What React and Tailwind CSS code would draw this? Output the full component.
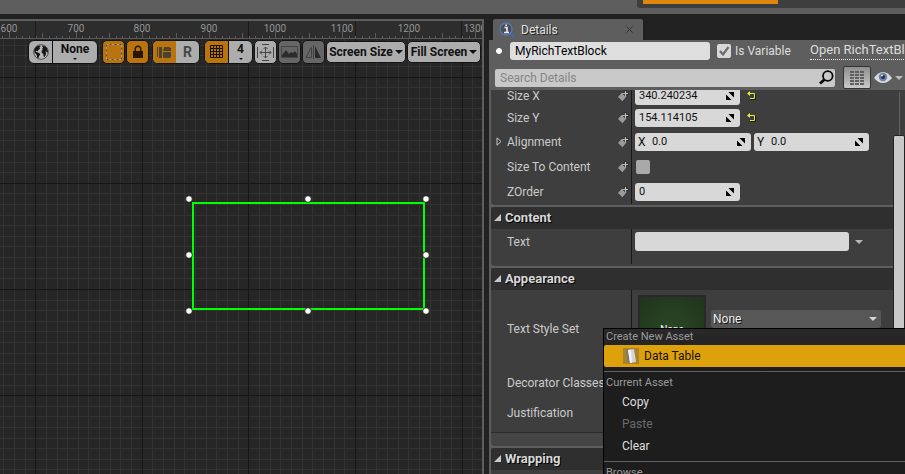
import React from "react";

const range = (n) => Array.from({ length: n }, (_, i) => i);

function Caret({ className = "h-1 w-2" }) {
  return (
    <svg viewBox="0 0 8 4" preserveAspectRatio="none" className={`shrink-0 ${className}`} fill="currentColor" aria-hidden="true">
      <path d="M0 0h8L4 4z" />
    </svg>
  );
}

function Ruler() {
  return (
    <svg className="block h-[18px] w-full shrink-0 bg-[#2d2d2d]" aria-hidden="true">
      {range(12).map((i) => (
        <line key={i} x1={35.5 + Math.round(i * 106.6)} x2={35.5 + Math.round(i * 106.6)} y1="0" y2="18" stroke="#1b1b1b" />
      ))}
      {range(120).map((i) => {
        const x = 9.5 + Math.round((i - 1) * 6.66);
        const k = (i + 9) % 10;
        const top = k === 0 ? 10 : k === 5 ? 12 : 15;
        return <line key={i} x1={x} x2={x} y1={top} y2="17" stroke="#5a5a5a" />;
      })}
      {range(8).map((i) => (
        <text
          key={i}
          x={9 + Math.round(i * 66.6)}
          y="11"
          textAnchor="middle"
          fill="#949494"
          className="font-[Roboto] text-[10px]"
        >
          {600 + i * 100}
        </text>
      ))}
      <line x1="0" x2="100%" y1="17.5" y2="17.5" stroke="#5a5a5a" />
    </svg>
  );
}

function Canvas() {
  const handles = [
    [189, 160], [308, 160], [426, 160],
    [189, 216], [426, 216],
    [189, 272], [308, 272], [426, 272],
  ];
  return (
    <svg className="absolute inset-0 h-full w-full bg-[#262626]" aria-hidden="true">
      {range(120).map((i) => {
        const x = Math.round(3.2 + i * 10.66) + 0.5;
        return i % 10 === 3 ? null : <line key={i} x1={x} x2={x} y1="0" y2="100%" stroke="#323232" />;
      })}
      {range(100).map((i) => {
        const y = Math.round(5.7 + i * 10.62) + 0.5;
        return i % 10 === 3 ? null : <line key={i} x1="0" x2="100%" y1={y} y2={y} stroke="#323232" />;
      })}
      {range(10).map((i) => {
        const y = Math.round(37.5 + i * 106.2) + 0.5;
        return <line key={i} x1="0" x2="100%" y1={y} y2={y} stroke="#161616" />;
      })}
      {range(12).map((i) => {
        const x = Math.round(35.2 + i * 106.6) + 0.5;
        return <line key={i} x1={x} x2={x} y1="0" y2="100%" stroke="#161616" />;
      })}
      <rect x="193" y="164" width="231" height="106" fill="none" stroke="#00ff00" strokeWidth="2" />
      {handles.map(([x, y]) => (
        <circle key={`${x}-${y}`} cx={x} cy={y} r="3.3" fill="#fff" stroke="#111" strokeWidth="0.8" />
      ))}
    </svg>
  );
}

function GlobeIcon() {
  return (
    <svg viewBox="0 0 16 16" className="size-4" aria-hidden="true">
      <circle cx="8" cy="8" r="7.3" fill="#b8b8b8" stroke="#333" strokeWidth="0.8" />
      <path fill="#151515" d="M1.500 5 3.500 2.400 6.500 1.400 7.600 2.600 6.400 3.600 7 4.800 5.400 6 4.600 7.200 3.400 6.800 2.600 7.400 4 8.200 6.200 9 7.200 10.400 6 12.200 5.400 14.400 4.200 13.400 3.600 10.800 1.800 9 1.200 7zM9.400 1.600 12.400 2.500 14.200 4.800 15 7.600 14.400 9 13.400 7.600 12.300 7.800 13.200 9.200 12.400 11.800 11.400 13 10.600 12.400 10.300 9.800 8.800 9 8.600 7 9.800 5.800 9 4.800 10.200 3.600 9.200 2.700z" />
    </svg>
  );
}

function GridIcon() {
  return (
    <svg viewBox="0 0 14 14" className="size-[14px]" aria-hidden="true">
      <path fill="none" stroke="#1a1000" d="M.5.5h12v12h-12zM3.500 0v13M6.500 0v13M9.500 0v13M0 3.500h13M0 6.500h13M0 9.500h13" />
    </svg>
  );
}

const toolButton = "flex items-center justify-center rounded-[5px] border border-[#141414]";

function Toolbar() {
  return (
    <div className="relative flex items-center justify-end pt-px pr-px font-bold text-[#111]">
      <div className="mr-1 flex h-6 w-[70px] overflow-hidden rounded-md border border-[#101010] bg-[#adadad]">
        <button aria-label="Localization" className="flex w-6 items-center justify-center border-r border-[#101010]"><GlobeIcon /></button>
        <button className="flex flex-1 flex-col items-center text-[12px] leading-[17px]">None<Caret className="h-[2px] w-1" /></button>
      </div>
      <button aria-label="Show outlines" className={`${toolButton} mr-px h-6 w-[23px] bg-[#ba740d]`}>
        <svg viewBox="0 0 16 16" className="size-4"><path fill="none" stroke="#57472b" d="M.5.5h15v15H.5z" /><path fill="none" stroke="#b0a080" strokeDasharray="3 2" d="M.5.5h15v15H.5z" /></svg>
      </button>
      <button aria-label="Respect locks" className={`${toolButton} mr-[3px] h-6 w-[23px] bg-[#ba740d]`}>
        <svg viewBox="0 0 12 14" className="h-[14px] w-3"><path fill="#251700" d="M1 6h10v7H1z" /><path d="M3.200 7V4a2.800 2.800 0 0 1 5.600 0v3" fill="none" stroke="#251700" strokeWidth="1.400" /></svg>
      </button>
      <div className="mr-1 flex h-6 w-12 overflow-hidden rounded-md border border-[#141414] bg-[#adadad]">
        <button aria-label="Transform mode" className="flex w-[23px] items-center justify-center bg-[#ba740d]">
          <svg viewBox="0 0 15 13" className="h-[13px] w-[15px]" fill="#4b4131"><path d="M0 1h1v10H0zM2 1h3v11H2zM7 1h5l2 1v3H6zM6 6h8v4l-1 2H7l-1-1z" /></svg>
        </button>
        <button className="flex-1 text-[14px] leading-none text-[#464646]">R</button>
      </div>
      <div className="mr-px flex h-6 w-[49px] overflow-hidden rounded-md border border-[#101010] bg-[#adadad]">
        <button aria-label="Grid snapping" className="flex w-6 items-center justify-center border-r border-[#101010] bg-[#ba740d]"><GridIcon /></button>
        <button className="flex flex-1 flex-col items-center text-[12px] leading-[17px]">4<Caret className="h-[2px] w-1" /></button>
      </div>
      <button aria-label="Zoom to fit" className={`${toolButton} mr-px h-6 w-[23px] bg-[#adadad]`}>
        <svg viewBox="0 0 17 17" className="size-[17px]" fill="none" stroke="#444"><path d="M.5 3v11M16.500 3v11M5 .5h7M5 16.500h7M3 8.500h11M8.500 3v11M5 6.500 3 8.500l2 2M12 6.500l2 2-2 2M6.500 5l2-2 2 2M6.500 12l2 2 2-2" /></svg>
      </button>
      <button aria-label="Preview background" className={`${toolButton} mr-px h-6 w-[23px] bg-[#666]`}>
        <svg viewBox="0 0 17 12" className="h-3 w-[17px]"><path d="M.5.5h16v11H.5z" fill="none" stroke="#444" /><path d="M1 11V9l4-5 3 4 2-2 2 1 2-2 2 3v3z" fill="#2c2c2c" /></svg>
      </button>
      <button aria-label="Flip preview" className={`${toolButton} mr-px h-6 w-[23px] bg-[#666]`}>
        <svg viewBox="0 0 17 14" className="h-[14px] w-[17px]"><path d="M6.500 2v10.500H1zM8.500 0v14" fill="none" stroke="#404040" /><path d="M10 1v12h6z" fill="#292929" /></svg>
      </button>
      <button className={`${toolButton} mr-px h-[22px] w-20 gap-[2px] bg-[#adadad] text-[12px] whitespace-nowrap`}>Screen Size<Caret /></button>
      <button className={`${toolButton} h-[22px] w-[74px] gap-[2px] bg-[#adadad] text-[12px] whitespace-nowrap`}>Fill Screen<Caret /></button>
    </div>
  );
}

function BindIcon() {
  return (
    <svg viewBox="0 0 12 12" className="mr-[2px] size-3 shrink-0" aria-hidden="true">
      <path fill="#9a9a9a" stroke="#242424" strokeWidth="0.6" d="M5 2 9.800 6.500 5.500 11.700 .5 7z" />
      <path stroke="#2c2c2c" strokeWidth="2.600" d="M8.500 0v6M6 3.500h5.500" />
      <path stroke="#c0c0c0" strokeWidth="1.200" d="M8.500 1v5M6 3.500h5" />
    </svg>
  );
}

function SpinIcon() {
  return (
    <svg viewBox="0 0 8 8" className="mr-[6px] size-2 shrink-0 fill-black" aria-hidden="true">
      <path d="M2.500 0H8v5.500zM0 2.500V8h5.500z" />
    </svg>
  );
}

function NumberBox({ id, axis, value, label, width }) {
  return (
    <div className={`flex h-[18px] items-center rounded-[3px] bg-[#d8d8d8] text-[11px] text-[#111] ${width}`}>
      {axis && <span className="w-[13px] pl-[3px] text-[12px]">{axis}</span>}
      <input id={id} aria-label={label} defaultValue={value} className="h-full min-w-0 flex-1 bg-transparent pl-1 outline-none" />
      <SpinIcon />
    </div>
  );
}

function ResetButton({ label }) {
  return (
    <button aria-label={label} className="ml-[7px]">
      <svg viewBox="0 0 9 9" className="block size-[9px]" aria-hidden="true">
        <path d="M3 8.500H8.500V3" fill="none" stroke="#171717" />
        <path d="M1 2.500h6.500v5H3" fill="none" stroke="#e7ed35" />
        <path d="M0 2.500 3 0v5z" fill="#e7ed35" />
      </svg>
    </button>
  );
}

function Row({ label, htmlFor, height, bind, expand, children }) {
  return (
    <div className={`flex shrink-0 text-[12px] ${height}`}>
      <div className="flex w-[141px] shrink-0 items-center border-r border-[#191919]">
        <span className="flex w-4 shrink-0 justify-center">
          {expand && (
            <svg viewBox="0 0 6 9" className="h-[9px] w-[6px]" aria-hidden="true"><path d="M1 .8v7.400l4-3.700z" fill="none" stroke="#c4c4c4" /></svg>
          )}
        </span>
        <label htmlFor={htmlFor} className="flex-1 whitespace-nowrap text-[#cbcbcb]">{label}</label>
        {bind && <BindIcon />}
      </div>
      <div className="flex min-w-0 flex-1 items-center pl-[3px]">{children}</div>
    </div>
  );
}

function SectionHeader({ children }) {
  return (
    <h2 className="flex h-[22px] shrink-0 items-center gap-1 rounded-tl-[4px] bg-[#2f2f2f] pl-[3px] text-[13px] font-bold text-[#d8d8d8] [text-shadow:1px_1px_0_#000]">
      <svg viewBox="0 0 7 7" className="mb-px size-[7px]" fill="#c8c8c8" aria-hidden="true"><path d="M7 0v7H0z" /></svg>
      {children}
    </h2>
  );
}

function DetailsTab() {
  return (
    <div className="ml-1 flex h-[21px] w-[150px] items-center rounded-t-[2px] bg-[#5e5e5e] pr-[10px] pl-[6px]">
      <svg viewBox="0 0 16 16" className="size-4 shrink-0" aria-hidden="true">
        <path d="m11 11 4 4" stroke="#4267bd" strokeWidth="2.200" />
        <circle cx="7" cy="7" r="6" fill="#4b4e55" stroke="#5579bf" strokeWidth="1.300" />
        <path d="M5.500 5.500H8V10M5 10.500h5M6.300 3.200h1.700" stroke="#eee" strokeWidth="1.600" fill="none" />
      </svg>
      <span className="ml-[6px] flex-1 text-[12px] text-[#e2e2e2] [text-shadow:1px_1px_0_#222]">Details</span>
      <button aria-label="Close tab">
        <svg viewBox="0 0 7 7" className="block size-[7px]"><path d="m.5.5 6 6M6.500.5l-6 6" stroke="#343434" /></svg>
      </button>
    </div>
  );
}

function DetailsHeader() {
  return (
    <div className="flex h-[50px] shrink-0 flex-col text-[12px]">
      <div className="flex items-center pt-[2px]">
        <svg viewBox="0 0 8 8" className="ml-[6px] size-2 shrink-0" aria-hidden="true"><path d="M3 1h2l2 2v2L5 7H3L1 5V3z" fill="#fff" /></svg>
        <input aria-label="Widget name" defaultValue="MyRichTextBlock" className="ml-[7px] h-[18px] w-[200px] shrink-0 rounded-[3px] bg-[#dedede] px-[5px] text-black outline-none" />
        <span className="relative ml-[7px] size-[14px] shrink-0">
          <input id="is-variable" type="checkbox" defaultChecked className="block size-[14px] appearance-none rounded-[2px] bg-[#d8d8d8]" />
          <svg viewBox="0 0 12 12" className="pointer-events-none absolute inset-px size-3" aria-hidden="true"><path d="m2 6 3 3.500L10.500 2" fill="none" stroke="#6f6f6f" strokeWidth="2.300" /></svg>
        </span>
        <label htmlFor="is-variable" className="ml-1 w-[75px] shrink-0 whitespace-nowrap text-[#ddd]">Is Variable</label>
        <a href="#source" className="h-[18px] border-b border-dotted border-[#eee] text-[13px] leading-4 whitespace-nowrap text-[#ddd]">Open RichTextBlock.h</a>
      </div>
      <div className="mt-[6px] flex items-center pl-[6px]">
        <div className="flex h-[18px] w-[340px] items-center rounded-[2px] bg-[#c9c9c9] pr-px">
          <input aria-label="Search Details" placeholder="Search Details" className="h-full min-w-0 flex-1 bg-transparent pl-[5px] outline-none placeholder:text-[#858585]" />
          <svg viewBox="0 0 15 15" className="size-[15px]" aria-hidden="true"><circle cx="8.800" cy="6" r="4.800" fill="none" stroke="#080808" strokeWidth="1.800" /><path d="m5.500 9.500-4.500 4" stroke="#080808" strokeWidth="2.800" /></svg>
        </div>
        <button aria-label="Property matrix" className="ml-2 flex h-[23px] w-7 items-center justify-center rounded-[2px] border border-[#333] bg-linear-to-b from-[#8f8f8f] to-[#c9c9c9]">
          <svg viewBox="0 0 14 14" className="size-[14px]" stroke="#606060" strokeWidth="2"><path d="M0 1h4M5 1h4M10 1h4M0 4h4M5 4h4M10 4h4M0 7h4M5 7h4M10 7h4M0 10h4M5 10h4M10 10h4M0 13h4M5 13h4M10 13h4" /></svg>
        </button>
        <button aria-label="View options" className="ml-[3px] flex items-center gap-[3px] text-[#bbb]">
          <svg viewBox="0 0 18 11" className="h-[11px] w-[18px]"><path d="M0 6q4-6 9-6t9 6q-4 5-9 5T0 6z" fill="#d7d9dd" /><circle cx="9" cy="5" r="4.200" fill="#6a82a8" /><circle cx="9" cy="5" r="2" fill="#202f4a" /><circle cx="8" cy="3.500" r="1" fill="#dfe8f7" /></svg>
          <Caret />
        </button>
      </div>
    </div>
  );
}

function ContextMenu() {
  const item = "flex h-[22px] w-full items-center pl-[18px] text-left text-[12px]";
  const heading = "flex items-center pl-[2px] text-[11px] text-[#9a9a9a]";
  return (
    <div role="menu" className="absolute top-[238px] right-0 left-[114px] h-[200px] border-t border-l border-black bg-linear-to-b from-[#292929] to-[#1d1d1d] to-20% text-[12px] text-[#dedede]">
      <div className={`${heading} h-4`}>Create New Asset</div>
      <button role="menuitem" className="flex h-[22px] w-full items-center rounded-l-[2px] bg-[#dda20b] pl-[19px] text-[#151000]">
        <span className="mr-[5px] flex size-4 items-center justify-center bg-[#a7842c]">
          <svg viewBox="0 0 12 15" className="h-[15px] w-3" aria-hidden="true"><path d="m1 1 4-1 2 12-4 2z" fill="#777" /><path d="m3 1 6-1 2 13-6 1z" fill="#d5d5d5" /><path d="m3 1 3-.5 1 13-2 .5z" fill="#f3f3f3" /></svg>
        </span>
        Data Table
      </button>
      <div className="mt-1 mb-1 h-px bg-[#606060]" />
      <div className={`${heading} h-[14px]`}>Current Asset</div>
      <div className="pt-px">
        <button role="menuitem" className={item}>Copy</button>
        <button role="menuitem" disabled className={`${item} text-[#6b6b6b]`}>Paste</button>
        <button role="menuitem" className={item}>Clear</button>
      </div>
      <div className="mt-1 mb-1 h-px bg-[#606060]" />
      <div className={`${heading} h-[14px]`}>Browse</div>
    </div>
  );
}

function PropertyList() {
  return (
    <div className="relative min-h-0 flex-1 overflow-hidden">
      <div className="-mt-[5px] ml-[2px] flex flex-col gap-[2px]">
        <section className="flex flex-col rounded-bl-[4px] bg-[#3e3e3e] pb-px">
          <Row label="Size X" htmlFor="size-x" height="h-[21px]" bind>
            <NumberBox id="size-x" value="340.240234" width="w-[105px]" />
            <ResetButton label="Reset Size X" />
          </Row>
          <Row label="Size Y" htmlFor="size-y" height="h-[23px]" bind>
            <NumberBox id="size-y" value="154.114105" width="w-[105px]" />
            <ResetButton label="Reset Size Y" />
          </Row>
          <Row label="Alignment" htmlFor="align-x" height="h-[25px]" bind expand>
            <NumberBox id="align-x" axis="X" value="0.0" width="mr-[3px] w-[116px]" />
            <NumberBox label="Alignment Y" axis="Y" value="0.0" width="w-[115px]" />
          </Row>
          <Row label="Size To Content" htmlFor="size-to-content" height="h-[25px]" bind>
            <input id="size-to-content" type="checkbox" className="ml-px size-[14px] appearance-none rounded-[2px] bg-[#a9a9a9]" />
          </Row>
          <Row label="ZOrder" htmlFor="zorder" height="h-[25px]" bind>
            <NumberBox id="zorder" value="0" width="w-[105px]" />
          </Row>
        </section>

        <section className="flex flex-col rounded-bl-[4px] bg-[#3e3e3e] pb-[2px]">
          <SectionHeader>Content</SectionHeader>
          <div className="flex h-[35px] flex-col">
            <Row label="Text" htmlFor="text-value" height="h-[25px]">
              <input id="text-value" className="h-[19px] w-[214px] rounded-[3px] bg-[#d8d8d8] px-1 text-black outline-none" />
              <button aria-label="Text options" className="ml-[6px] text-[#b8b8b8]"><Caret /></button>
            </Row>
            <div className="w-[141px] flex-1 border-r border-[#191919]" />
          </div>
        </section>

        <section className="flex flex-col rounded-bl-[4px] bg-[#3e3e3e]">
          <SectionHeader>Appearance</SectionHeader>
          <Row label="Text Style Set" htmlFor="style-set" height="h-[78px]">
            <div className="ml-[3px] flex size-[68px] items-center justify-center border-2 border-[#292929] bg-radial from-[#2a4725] to-[#20341d] text-[10px] text-white">None</div>
            <div className="relative ml-[5px] flex items-center self-start pt-5">
              <select id="style-set" className="h-[18px] w-[170px] appearance-none rounded-[3px] bg-[#575757] pl-[2px] text-[12px] text-[#eee] outline-none [text-shadow:1px_1px_0_#111]">
                <option>None</option>
              </select>
              <Caret className="pointer-events-none absolute right-1 h-1 w-2 text-[#d6d6d6]" />
            </div>
          </Row>
          <Row label="Decorator Classes" height="h-[30px]" />
          <Row label="Justification" height="h-[30px]" />
          <div className="mt-1 h-[14px] rounded-bl-[4px] border-t border-[#2b2b2b] bg-[#454545]" />
        </section>

        <section className="flex flex-col bg-[#3e3e3e]">
          <SectionHeader>Wrapping</SectionHeader>
          <div className="h-8" />
        </section>
      </div>
      <div className="absolute top-[2px] right-[5px] h-11 w-px bg-[#636363]" />
      <div className="absolute top-[45px] right-0 h-[300px] w-3 rounded-t-[2px] border border-[#222] bg-[#c9c9c9]" />
      <ContextMenu />
    </div>
  );
}

export default function App() {
  return (
    <div className="flex h-screen w-full flex-col overflow-hidden bg-[#212121] font-[Roboto,'Liberation_Sans',sans-serif]">
      <header className="flex h-[14px] shrink-0 justify-end bg-[#5e5e5e]">
        <div className="h-2 w-[268px] rounded-bl-[3px] bg-[#3e3e3e] pl-[6px]">
          <div className="h-1 w-[135px] bg-[#df860d]" />
        </div>
      </header>
      <main className="flex min-h-0 flex-1 pt-[5px]">
        <div className="flex min-w-0 flex-1 flex-col border-t-2 border-r-2 border-[#5e5e5e]">
          <Ruler />
          <div className="relative min-h-0 flex-1 overflow-hidden">
            <Canvas />
            <Toolbar />
          </div>
        </div>
        <aside className="ml-[5px] flex w-[416px] shrink-0 flex-col">
          <DetailsTab />
          <div className="flex min-h-0 flex-1 flex-col overflow-hidden bg-[#5e5e5e]">
            <DetailsHeader />
            <PropertyList />
          </div>
        </aside>
      </main>
    </div>
  );
}
